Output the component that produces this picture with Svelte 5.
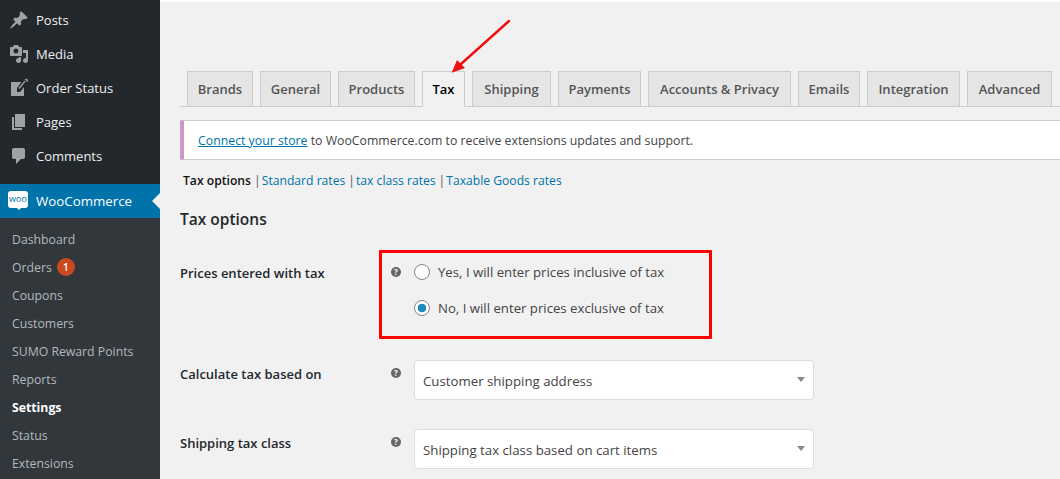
<script>
	const menu = [
		{ label: 'Posts', icon: 'M10.44 3.02l1.82-1.82 6.36 6.35-1.83 1.82c-1.05-.68-2.48-.57-3.41.36l-.75.75c-.92.93-1.04 2.35-.35 3.41l-1.83 1.82-2.41-2.41-2.8 2.79c-.42.42-3.38 2.71-3.8 2.29s1.86-3.39 2.28-3.81l2.79-2.79L4.1 9.36l1.83-1.82c1.05.69 2.48.57 3.4-.36l.75-.75c.93-.92 1.05-2.35.36-3.41z' },
		{ label: 'Media', icon: 'M13 11V4c0-.55-.45-1-1-1h-1.67L9 1H5L3.67 3H2c-.55 0-1 .45-1 1v7c0 .55.45 1 1 1h10c.55 0 1-.45 1-1zM7 4.5c1.38 0 2.5 1.12 2.5 2.5S8.38 9.5 7 9.5 4.5 8.38 4.5 7 5.62 4.5 7 4.5zM14 6h5v10.5c0 1.38-1.12 2.5-2.5 2.5S14 17.88 14 16.5s1.12-2.5 2.5-2.5c.17 0 .34.02.5.05V9h-3V6zm-4 8.05V13h2v3.5c0 1.38-1.12 2.5-2.5 2.5S7 17.88 7 16.5 8.12 14 9.5 14c.17 0 .34.02.5.05z' },
		{ label: 'Order Status', icon: 'M2 4h10.500L8 10v4h3l4-5v9H2zM9.500 10l6-7.300 1.100 .9-6 7.300zM15.700 1.800a1.700 1.700 0 1 1 2.500 2.200l-.8-.7a.6.6 0 1 0-.9-.8z' },
		{ label: 'Pages', icon: 'M6 15V2h10v13H6zm-1 1h8v2H3V5h2v11z' },
		{ label: 'Comments', icon: 'M5 2h9c1.1 0 2 .9 2 2v7c0 1.1-.9 2-2 2h-2l-5 5v-5H5c-1.1 0-2-.9-2-2V4c0-1.1.9-2 2-2z' }
	];
	const submenu = ['Dashboard', 'Orders', 'Coupons', 'Customers', 'SUMO Reward Points', 'Reports', 'Settings', 'Status', 'Extensions'];
	const tabs = [
		{ label: 'Brands', width: 66 },
		{ label: 'General', width: 71 },
		{ label: 'Products', width: 77 },
		{ label: 'Tax', width: 43 },
		{ label: 'Shipping', width: 79 },
		{ label: 'Payments', width: 83 },
		{ label: 'Accounts & Privacy', width: 143 },
		{ label: 'Emails', width: 62 },
		{ label: 'Integration', width: 93 },
		{ label: 'Advanced', width: 85 }
	];
	const sections = ['Standard rates', 'tax class rates', 'Taxable Goods rates'];
</script>

<div class="page">
	<aside>
		<ul class="menu">
			{#each menu as item}
				<li>
					<svg viewBox="0 0 20 20" width="20" height="20"><path d={item.icon} /></svg>
					{item.label}
				</li>
			{/each}
		</ul>
		<div class="woo">
			<span class="woo-logo">woo</span>
			WooCommerce
		</div>
		<ul class="submenu">
			{#each submenu as item}
				<li class:current={item === 'Settings'}>
					{item}
					{#if item === 'Orders'}<span class="badge">1</span>{/if}
				</li>
			{/each}
		</ul>
	</aside>

	<main>
		<nav class="tabs">
			{#each tabs as tab}
				<span class="tab" class:active={tab.label === 'Tax'} style="width: {tab.width}px">{tab.label}</span>
			{/each}
		</nav>

		<div class="notice"><a href="#top">Connect your store</a> to WooCommerce.com to receive extensions updates and support.</div>

		<div class="sections">
			<strong>Tax options</strong>
			{#each sections as s}
				<span class="sep">|</span><span class="link">{s}</span>
			{/each}
		</div>

		<h2>Tax options</h2>

		<div class="row radios-row">
			<div class="label">Prices entered with tax</div>
			<span class="help">?</span>
			<div class="radios">
				<div class="radio"><span class="dot"></span>Yes, I will enter prices inclusive of tax</div>
				<div class="radio"><span class="dot on"></span>No, I will enter prices exclusive of tax</div>
			</div>
		</div>

		<div class="row select-row first">
			<div class="label">Calculate tax based on</div>
			<span class="help">?</span>
			<div class="select">Customer shipping address</div>
		</div>

		<div class="row select-row">
			<div class="label">Shipping tax class</div>
			<span class="help">?</span>
			<div class="select">Shipping tax class based on cart items</div>
		</div>

		<div class="redbox"></div>
		<svg class="arrow" width="80" height="70" viewBox="0 0 80 70">
			<line x1="69" y1="2" x2="21" y2="45" stroke="#f00f0f" stroke-width="2.4" stroke-linecap="round" />
			<polygon points="11.700,53.700 17,41 25,49" fill="#f00f0f" />
		</svg>
	</main>
</div>

<style>
	:global(body) {
		margin: 0;
		overflow: hidden;
	}
	.page {
		display: flex;
		height: 479px;
		overflow: hidden;
		font-family: 'Open Sans', sans-serif;
		font-size: 13px;
		color: #444;
	}
	aside {
		flex: 0 0 160px;
		background: #23282d;
		color: #eee;
	}
	ul {
		list-style: none;
		margin: 0;
		padding: 0;
	}
	.menu {
		padding-top: 3px;
		margin-bottom: 11px;
	}
	.menu li {
		display: flex;
		align-items: center;
		gap: 7px;
		height: 34px;
		padding-left: 9px;
	}
	.menu svg {
		fill: #9ea3a8;
	}
	.woo {
		position: relative;
		display: flex;
		align-items: center;
		gap: 8px;
		height: 34px;
		padding-left: 8px;
		background: #0073aa;
		color: #fff;
		font-size: 13.300px;
	}
	.woo::after {
		content: '';
		position: absolute;
		right: 0;
		top: 9px;
		border: 8px solid transparent;
		border-right-color: #f1f1f1;
	}
	.woo-logo {
		position: relative;
		width: 20px;
		height: 17px;
		margin-top: -3px;
		border-radius: 3px;
		background: #fff;
		color: #0073aa;
		font-size: 9px;
		line-height: 15px;
		text-align: center;
	}
	.woo-logo::after {
		content: '';
		position: absolute;
		left: 8px;
		top: 16px;
		border: 3px solid transparent;
		border-top-color: #fff;
		border-bottom: 0;
	}
	.submenu {
		background: #32373c;
		padding: 7px 0 0 12px;
		height: 300px;
		color: #b4b9be;
		font-size: 12.250px;
	}
	.submenu li {
		display: flex;
		align-items: center;
		gap: 5px;
		height: 28px;
	}
	.submenu .current {
		color: #fff;
		font-weight: 700;
	}
	.badge {
		width: 18px;
		height: 18px;
		border-radius: 50%;
		background: #ca4a1f;
		color: #fff;
		font-size: 10px;
		font-weight: 600;
		line-height: 18px;
		text-align: center;
	}
	main {
		position: relative;
		flex: 1;
		min-width: 0;
		background: #f1f1f1;
		border-top: 2px solid #fff;
		padding: 69px 0 0 20px;
	}
	.tabs {
		display: flex;
		gap: 7px;
		height: 35px;
		padding-left: 7px;
		border-bottom: 1px solid #ccc;
	}
	.tab {
		box-sizing: border-box;
		height: 36px;
		background: #e5e5e5;
		border: 1px solid #ccc;
		color: #555;
		font-size: 13px;
		font-weight: 600;
		line-height: 35px;
		text-align: center;
		white-space: nowrap;
	}
	.tab.active {
		background: #f1f1f1;
		border-bottom-color: #f1f1f1;
		color: #000;
	}
	.notice {
		box-sizing: border-box;
		height: 40px;
		margin-top: 13px;
		padding-left: 14px;
		background: #fff;
		border: 1px solid #ccd0d4;
		border-left: 4px solid #cc99c2;
		border-right: 0;
		line-height: 39px;
		font-size: 12.300px;
	}
	.notice a {
		color: #0073aa;
	}
	.sections {
		height: 18px;
		margin-top: 12px;
		padding-left: 3px;
		line-height: 18px;
		font-size: 12.150px;
	}
	.sections strong {
		margin-right: -1px;
		color: #111;
		font-weight: 600;
	}
	.sep {
		margin: 0 1px;
		color: #555;
	}
	.link {
		margin-right: 2px;
		color: #0073aa;
	}
	h2 {
		margin: 17px 0 0;
		height: 24px;
		color: #23282d;
		font-size: 15.500px;
		font-weight: 600;
		line-height: 24px;
	}
	.row {
		display: flex;
		align-items: flex-start;
	}
	.radios-row {
		margin-top: 32px;
	}
	.select-row {
		margin-top: 29px;
	}
	.select-row.first {
		margin-top: 42px;
	}
	.label {
		width: 211px;
		color: #23282d;
		font-size: 13px;
		font-weight: 600;
		line-height: 20px;
	}
	.select-row .label {
		padding-top: 4px;
	}
	.help {
		box-sizing: border-box;
		flex: 0 0 10px;
		width: 10px;
		height: 10px;
		margin: 4px 13px 0 0;
		border-radius: 50%;
		background: #666;
		color: #fff;
		font-size: 8px;
		font-weight: 700;
		line-height: 10px;
		text-align: center;
	}
	.select-row .help {
		margin-top: 8px;
	}
	.radios {
		display: flex;
		flex-direction: column;
		gap: 16px;
		margin-top: -1px;
	}
	.radio {
		display: flex;
		align-items: center;
		gap: 8px;
		height: 20px;
		font-size: 13.200px;
	}
	.dot {
		box-sizing: border-box;
		width: 16px;
		height: 16px;
		border: 1px solid #7e8993;
		border-radius: 50%;
		background: #fff;
	}
	.dot.on {
		background: radial-gradient(circle, #1e8cbe 0 4px, #fff 4.600px);
	}
	.select {
		position: relative;
		box-sizing: border-box;
		width: 400px;
		height: 40px;
		padding-left: 8px;
		background: #fff;
		border: 1px solid #ddd;
		border-radius: 4px;
		line-height: 41px;
		font-size: 13.250px;
	}
	.select::after {
		content: '';
		position: absolute;
		right: 8px;
		top: 16px;
		border: 4px solid transparent;
		border-top: 5px solid #888;
	}
	.redbox {
		position: absolute;
		left: 219px;
		top: 248px;
		width: 327px;
		height: 83px;
		border: 3px solid #f00;
		border-radius: 1px;
	}
	.arrow {
		position: absolute;
		left: 280px;
		top: 17px;
	}
</style>
